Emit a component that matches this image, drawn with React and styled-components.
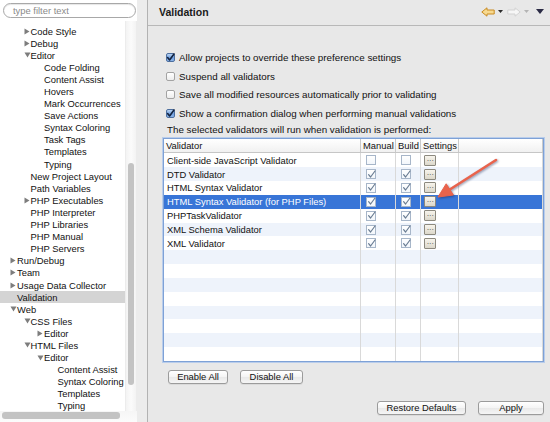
import React from 'react';
import styled, { createGlobalStyle } from 'styled-components';

const GlobalStyle = createGlobalStyle`
  html, body { margin: 0; padding: 0; }
  body {
    width: 550px; height: 422px; overflow: hidden;
    font-family: "Liberation Sans", Arial, sans-serif;
  }
  #root { width: 550px; height: 422px; }
`;

const Window = styled.div`
  display: flex;
  width: 550px;
  height: 422px;
  background: #e8e8e8;
  color: #111;
`;

/* ---------- left side ---------- */
const LeftPanel = styled.div`
  width: 137px;
  display: flex;
  flex-direction: column;
  background: #fff;
`;

const FilterBar = styled.div`
  height: 21px;
  box-sizing: border-box;
  padding: 3px 0 0 3px;
`;

const FilterInput = styled.div`
  width: 133px;
  height: 15px;
  box-sizing: border-box;
  border: 1px solid #a8a8a8;
  border-radius: 8px;
  box-shadow: inset 0 1px 1px rgba(0, 0, 0, 0.1);
  padding-left: 9px;
  font-size: 9.4px;
  line-height: 13px;
  color: #8a8a8a;
`;

const TreeArea = styled.div`
  flex: 1;
  min-height: 0;
  display: flex;
`;

const TreeList = styled.div`
  width: 125px;
  overflow: hidden;
  padding-top: 4px;
  box-sizing: border-box;
`;

const TreeRow = styled.div`
  height: 12.1px;
  display: flex;
  align-items: center;
  padding-left: ${p => 10 + p.$depth * 13.5}px;
  background: ${p => (p.$selected ? '#d4d4d4' : 'transparent')};
  font-size: 9.4px;
  white-space: nowrap;
  color: #111;
`;

const Twisty = styled.span`
  width: 7px;
  flex: none;
  display: inline-flex;
  align-items: center;
`;

const VScroll = styled.div`
  width: 12px;
  box-sizing: border-box;
  border-left: 1px solid #ececec;
  border-right: 1px solid #ececec;
  background: linear-gradient(90deg, #f3f3f3, #fbfbfb 50%, #f3f3f3);
  padding: 142px 0 0 2px;
`;

const VThumb = styled.div`
  width: 6px;
  height: 222px;
  border-radius: 3px;
  background: #c3c3c3;
`;

const HScroll = styled.div`
  height: 11px;
  box-sizing: border-box;
  padding: 1px 0 0 2px;
  background: linear-gradient(#f6f6f6, #fbfbfb);
`;

const HThumb = styled.div`
  width: 118px;
  height: 6.5px;
  border-radius: 3px;
  background: #c3c3c3;
`;

const Sash = styled.div`
  width: 10px;
  background: #ececec;
  border-right: 1px solid #b2b2b2;
`;

/* ---------- right side ---------- */
const RightPanel = styled.div`
  flex: 1;
  display: flex;
  flex-direction: column;
  min-width: 0;
`;

const TitleBar = styled.div`
  height: 26px;
  box-sizing: border-box;
  border-bottom: 1px solid #b8b8b8;
  display: flex;
  align-items: center;
  justify-content: space-between;
  padding: 0 6px 2px 11px;
`;

const Title = styled.div`
  font-weight: bold;
  font-size: 10.5px;
  color: #1a1a1a;
`;

const Nav = styled.div`
  display: flex;
  align-items: center;
`;

const NavIcon = styled.svg`
  display: block;
  margin-left: ${p => p.$gap || 0}px;
`;

const Content = styled.div`
  display: flex;
  flex-direction: column;
  padding: 22.8px 6px 0 15px;
`;

const CheckRow = styled.label`
  height: 18.4px;
  display: flex;
  align-items: center;
  gap: 4px;
  padding-left: 3px;
  font-size: 9.8px;
  color: #111;
`;

const AquaBox = styled.span`
  width: 9px;
  height: 9px;
  flex: none;
  box-sizing: border-box;
  border-radius: 2px;
  border: 1px solid ${p => (p.$checked ? '#4d6f9f' : '#a3a3a3')};
  background: ${p =>
    p.$checked
      ? 'linear-gradient(#b9d3f3, #6f9fe0 55%, #8db6ea)'
      : 'linear-gradient(#ffffff, #ededed)'};
  display: inline-flex;
  align-items: center;
  justify-content: center;
  overflow: visible;
`;

const Caption = styled.div`
  height: 16px;
  line-height: 16px;
  padding-left: 4px;
  font-size: 9.8px;
  color: #111;
`;

const Table = styled.div`
  position: relative;
  height: 224px;
  box-sizing: border-box;
  border: 1px solid #7ea1d6;
  box-shadow: 0 0 0 1px #b9cdeb;
  background: #fff;
  display: flex;
  flex-direction: column;
`;

const Cols = '197px 35px 25px 38px 1fr';

const HeaderRow = styled.div`
  display: grid;
  grid-template-columns: ${Cols};
  height: 14px;
  flex: none;
  box-sizing: border-box;
  background: linear-gradient(#ffffff, #f1f1f1);
  border-bottom: 1px solid #c6c6c6;
`;

const HeadCell = styled.div`
  border-right: 1px solid #cacaca;
  padding-left: 2px;
  font-size: 9.4px;
  line-height: 13px;
  color: #111;
  white-space: nowrap;
  overflow: hidden;
`;

const Body = styled.div`
  flex: 1;
  overflow: hidden;
`;

const Row = styled.div`
  display: grid;
  grid-template-columns: ${Cols};
  height: 13.85px;
  background: ${p => (p.$selected ? '#3875d7' : p.$odd ? '#eef3fb' : '#ffffff')};
  color: ${p => (p.$selected ? '#fff' : '#111')};
`;

const Cell = styled.div`
  border-right: 1px solid #d9d9d9;
  padding-left: ${p => p.$pad ?? 3}px;
  display: flex;
  align-items: center;
  font-size: 9.4px;
  white-space: nowrap;
  overflow: hidden;
`;

const TableBox = styled.span`
  width: 10px;
  height: 10px;
  box-sizing: border-box;
  border: 1px solid #a7b6c9;
  background: linear-gradient(#ffffff, #f2f6fb);
  display: inline-flex;
  align-items: center;
  justify-content: center;
`;

const DotsButton = styled.span`
  width: 12px;
  height: 11px;
  box-sizing: border-box;
  border: 1px solid #8c897f;
  border-radius: 1px;
  background: linear-gradient(#f7f4ec, #dcd8cb);
  color: #222;
  font-size: 7px;
  line-height: 5px;
  letter-spacing: 0.4px;
  padding-left: 1px;
  text-align: center;
  overflow: hidden;
`;

const Annotation = styled.svg`
  position: absolute;
  left: 265px;
  top: 15px;
  overflow: visible;
  filter: drop-shadow(1px 1.5px 0.8px rgba(20, 30, 80, 0.45));
`;

const ButtonRow = styled.div`
  display: flex;
  gap: 12px;
  justify-content: ${p => (p.$end ? 'flex-end' : 'flex-start')};
  margin-top: ${p => p.$top}px;
  padding-left: ${p => (p.$end ? 0 : 5)}px;
`;

const PushButton = styled.div`
  width: ${p => p.$w}px;
  height: 14px;
  box-sizing: border-box;
  border: 1px solid #9b9b9b;
  border-radius: 3px;
  background: linear-gradient(#ffffff, #f4f4f4 50%, #e9e9e9 51%, #f5f5f5);
  box-shadow: 0 1px 0 rgba(0, 0, 0, 0.06);
  font-size: 9.4px;
  line-height: 12px;
  text-align: center;
  color: #111;
`;

/* ---------- small drawings ---------- */
const Collapsed = () => (
  <svg width="6" height="7" viewBox="0 0 6 7">
    <polygon points="0.5,0.5 5.5,3.5 0.5,6.5" fill="#7d7d7d" />
  </svg>
);

const Expanded = () => (
  <svg width="7" height="6" viewBox="0 0 7 6">
    <polygon points="0.5,0.5 6.5,0.5 3.5,5.5" fill="#7d7d7d" />
  </svg>
);

const Check = ({ color = '#13233f', w = 1.6 }) => (
  <svg width="9" height="9" viewBox="0 0 9 9" style={{ overflow: 'visible' }}>
    <path d="M1.6 4.6 L3.6 7 L8 1" fill="none" stroke={color} strokeWidth={w} strokeLinecap="round" strokeLinejoin="round" />
  </svg>
);

const tree = [
  ['Code Style', 1, 'c'],
  ['Debug', 1, 'c'],
  ['Editor', 1, 'e'],
  ['Code Folding', 2],
  ['Content Assist', 2],
  ['Hovers', 2],
  ['Mark Occurrences', 2],
  ['Save Actions', 2],
  ['Syntax Coloring', 2],
  ['Task Tags', 2],
  ['Templates', 2],
  ['Typing', 2],
  ['New Project Layout', 1],
  ['Path Variables', 1],
  ['PHP Executables', 1, 'c'],
  ['PHP Interpreter', 1],
  ['PHP Libraries', 1],
  ['PHP Manual', 1],
  ['PHP Servers', 1],
  ['Run/Debug', 0, 'c'],
  ['Team', 0, 'c'],
  ['Usage Data Collector', 0, 'c'],
  ['Validation', 0, null, true],
  ['Web', 0, 'e'],
  ['CSS Files', 1, 'e'],
  ['Editor', 2, 'c'],
  ['HTML Files', 1, 'e'],
  ['Editor', 2, 'e'],
  ['Content Assist', 3],
  ['Syntax Coloring', 3],
  ['Templates', 3],
  ['Typing', 3],
];

const options = [
  ['Allow projects to override these preference settings', true],
  ['Suspend all validators', false],
  ['Save all modified resources automatically prior to validating', false],
  ['Show a confirmation dialog when performing manual validations', true],
];

const validators = [
  ['Client-side JavaScript Validator', false],
  ['DTD Validator', true],
  ['HTML Syntax Validator', true],
  ['HTML Syntax Validator (for PHP Files)', true, true],
  ['PHPTaskValidator', true],
  ['XML Schema Validator', true],
  ['XML Validator', true],
];

const TableCheck = ({ on }) => (
  <TableBox>{on && <Check color="#6a7d93" w={1.2} />}</TableBox>
);

export default function App() {
  const rows = [];
  for (let i = 0; i < 16; i++) {
    const v = validators[i];
    rows.push(
      <Row key={i} $odd={i % 2 === 1} $selected={v && v[2]}>
        <Cell>{v ? v[0] : ''}</Cell>
        <Cell $pad={5}>{v && <TableCheck on={v[1]} />}</Cell>
        <Cell $pad={5}>{v && <TableCheck on={v[1]} />}</Cell>
        <Cell $pad={3}>{v && <DotsButton>...</DotsButton>}</Cell>
        <Cell />
      </Row>
    );
  }

  return (
    <>
      <GlobalStyle />
      <Window>
        <LeftPanel>
          <FilterBar>
            <FilterInput>type filter text</FilterInput>
          </FilterBar>
          <TreeArea>
            <TreeList>
              {tree.map(([label, depth, kind, sel], i) => (
                <TreeRow key={i} $depth={depth} $selected={sel}>
                  <Twisty>
                    {kind === 'c' && <Collapsed />}
                    {kind === 'e' && <Expanded />}
                  </Twisty>
                  {label}
                </TreeRow>
              ))}
            </TreeList>
            <VScroll>
              <VThumb />
            </VScroll>
          </TreeArea>
          <HScroll>
            <HThumb />
          </HScroll>
        </LeftPanel>
        <Sash />
        <RightPanel>
          <TitleBar>
            <Title>Validation</Title>
            <Nav>
              <NavIcon width="14" height="10" viewBox="0 0 14 10">
                <polygon points="0.8,5 6,0.8 6,3 13.2,3 13.2,7 6,7 6,9.2" fill="#f7d98f" stroke="#c98b22" strokeWidth="1" strokeLinejoin="round" />
              </NavIcon>
              <NavIcon $gap={3} width="5" height="3" viewBox="0 0 5 3">
                <polygon points="0,0 5,0 2.5,3" fill="#2a2a2a" />
              </NavIcon>
              <NavIcon $gap={4} width="14" height="10" viewBox="0 0 14 10">
                <polygon points="13.2,5 8,0.8 8,3 0.8,3 0.8,7 8,7 8,9.2" fill="#f6f6f6" stroke="#d2d2d2" strokeWidth="1" strokeLinejoin="round" />
              </NavIcon>
              <NavIcon $gap={3} width="5" height="3" viewBox="0 0 5 3">
                <polygon points="0,0 5,0 2.5,3" fill="#b4b4b4" />
              </NavIcon>
              <NavIcon $gap={7} width="8" height="5" viewBox="0 0 8 5">
                <polygon points="0,0 8,0 4,5" fill="#2b2b45" />
              </NavIcon>
            </Nav>
          </TitleBar>
          <Content>
            {options.map(([text, on]) => (
              <CheckRow key={text}>
                <AquaBox $checked={on}>{on && <Check />}</AquaBox>
                {text}
              </CheckRow>
            ))}
            <Caption>The selected validators will run when validation is performed:</Caption>
            <Table>
              <HeaderRow>
                <HeadCell>Validator</HeadCell>
                <HeadCell>Manual</HeadCell>
                <HeadCell>Build</HeadCell>
                <HeadCell>Settings</HeadCell>
                <HeadCell />
              </HeaderRow>
              <Body>{rows}</Body>
              <Annotation width="80" height="55" viewBox="0 0 80 55">
                <line x1="67" y1="6" x2="20" y2="36" stroke="#e9634c" strokeWidth="2.6" strokeLinecap="round" />
                <polygon points="9,43 24.4,41 17.2,29.8" fill="#e9634c" stroke="#e9634c" strokeWidth="1" strokeLinejoin="round" />
              </Annotation>
            </Table>
            <ButtonRow $top={8}>
              <PushButton $w={60}>Enable All</PushButton>
              <PushButton $w={63}>Disable All</PushButton>
            </ButtonRow>
            <ButtonRow $end $top={16.6}>
              <PushButton $w={89}>Restore Defaults</PushButton>
              <PushButton $w={66}>Apply</PushButton>
            </ButtonRow>
          </Content>
        </RightPanel>
      </Window>
    </>
  );
}
